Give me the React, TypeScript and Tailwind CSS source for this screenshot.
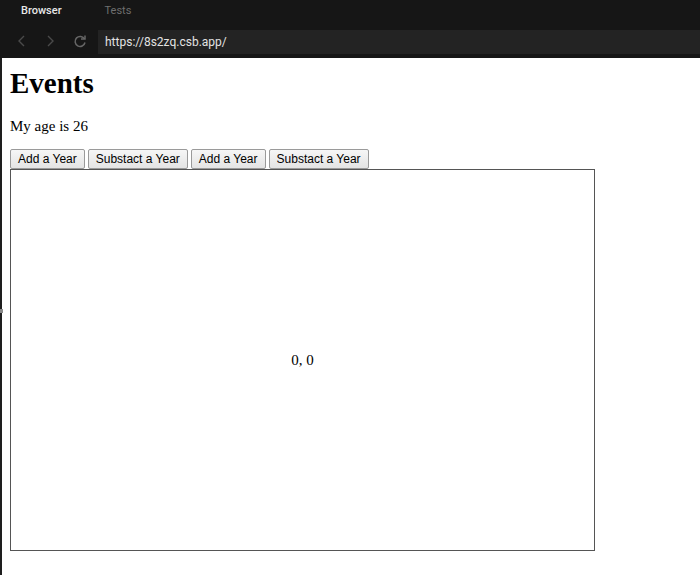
import React, { useState } from "react";

const ChevronLeft = () => (
  <svg width="12" height="14" viewBox="0 0 12 14" fill="none" stroke="#4a4a4a" strokeWidth="1.4">
    <path d="M8 2 L3 7 L8 12" />
  </svg>
);

const ChevronRight = () => (
  <svg width="12" height="14" viewBox="0 0 12 14" fill="none" stroke="#4a4a4a" strokeWidth="1.4">
    <path d="M4 2 L9 7 L4 12" />
  </svg>
);

const Reload = () => (
  <svg width="14" height="14" viewBox="0 0 14 14" fill="none" stroke="#666" strokeWidth="1.5">
    <path d="M11.5 5 A5 5 0 1 0 12 8.5" />
    <path d="M8 5 H12 V1.5" />
  </svg>
);

const btn =
  "h-[20px] px-[7px] text-[12px] leading-none text-black border border-[#9a9a9a] rounded-[2px] bg-gradient-to-b from-[#f6f6f6] to-[#e4e4e4] [font-family:'Liberation_Sans',Arial,sans-serif]";

export default function App() {
  const [age, setAge] = useState(26);
  const [pos, setPos] = useState({ x: 0, y: 0 });

  return (
    <div className="w-[700px] h-[575px] bg-white overflow-hidden flex flex-col">
      {/* TABS */}
      <div className="h-[23px] bg-[#161616] flex items-center text-[11px] [font-family:Roboto,'Noto_Sans',sans-serif] shrink-0">
        <span className="ml-[21px] text-[#e8e8e8] font-medium">Browser</span>
        <span className="ml-[43px] text-[#6e6e6e]">Tests</span>
      </div>

      {/* ADDRESS BAR */}
      <div className="h-[35px] bg-[#161616] flex items-stretch shrink-0">
        <div className="w-[98px] flex items-center">
          <span className="ml-[16px]">
            <ChevronLeft />
          </span>
          <span className="ml-[16px]">
            <ChevronRight />
          </span>
          <span className="ml-[17px]">
            <Reload />
          </span>
        </div>
        <div className="flex-1 mt-[7px] mb-[4px] bg-[#232323] flex items-center pl-[7px] text-[12px] text-[#e2e2e2] [font-family:Roboto,'Noto_Sans',sans-serif]">
          https://8s2zq.csb.app/
        </div>
      </div>

      {/* PAGE */}
      <div className="flex-1 flex">
        <div className="w-[2px] bg-[#1e1e1e] relative">
          <div className="absolute left-0 top-[251px] w-[3px] h-[4px] bg-[#888]" />
        </div>
        <div className="flex-1 pl-[8px] pt-[7px] [font-family:'Liberation_Serif','Times_New_Roman',serif] text-black">
          <h1 className="text-[29px] font-bold leading-[37px]">Events</h1>
          <p className="mt-[15px] text-[15px] leading-[18px]">My age is {age}</p>
          <div className="mt-[14px] flex gap-[3px]">
            <button className={btn} onClick={() => setAge(age + 1)}>
              Add a Year
            </button>
            <button className={btn} onClick={() => setAge(age - 1)}>
              Substact a Year
            </button>
            <button className={btn} onClick={() => setAge(age + 1)}>
              Add a Year
            </button>
            <button className={btn} onClick={() => setAge(age - 1)}>
              Substact a Year
            </button>
          </div>
          <div
            className="w-[585px] h-[382px] border border-[#555] flex items-center justify-center text-[15px]"
            onMouseMove={(e) => setPos({ x: e.nativeEvent.offsetX, y: e.nativeEvent.offsetY })}
          >
            {pos.x}, {pos.y}
          </div>
        </div>
      </div>
    </div>
  );
}
